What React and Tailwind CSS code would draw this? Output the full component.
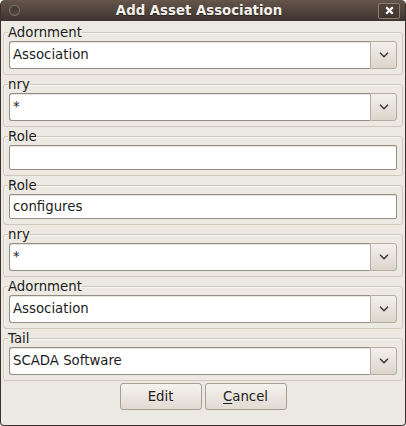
import React from "react";

function Chevron() {
  return (
    <svg width="10" height="6" viewBox="0 0 10 6" fill="none">
      <path d="M1 0.8 L5 4.8 L9 0.8" stroke="#3a3a3a" strokeWidth="1.5" />
    </svg>
  );
}

function Combo({ value }) {
  return (
    <div className="flex h-[28px]">
      <div className="flex-1 flex items-center bg-white border border-[#948d83] border-r-0 rounded-l-[3px] pl-[3px] text-[#1c1c1c] shadow-[inset_0_1px_0_#e8e4de]">
        {value}
      </div>
      <div className="w-[27px] flex items-center justify-center border border-[#b4ada2] rounded-r-[3px] bg-gradient-to-b from-[#f3f0ec] to-[#dcd5cb]">
        <Chevron />
      </div>
    </div>
  );
}

function Entry({ value }) {
  return (
    <div className="h-[25px] flex items-center bg-white border border-[#948d83] rounded-[2px] pl-[3px] text-[#1c1c1c] shadow-[inset_0_1px_0_#e8e4de]">
      {value}
    </div>
  );
}

function Group({ label, children }) {
  return (
    <fieldset className="border border-[#cfc8bc] rounded-[3px] px-[5px] pt-[1px] pb-[5px] shadow-[inset_1px_1px_0_#f7f5f2]">
      <legend className="ml-[-1px] leading-[15px] text-[#1c1c1c]">{label}</legend>
      {children}
    </fieldset>
  );
}

export default function App() {
  return (
    <div className="w-[406px] h-[426px] flex flex-col bg-white font-['DejaVu_Sans',sans-serif] text-[13.3px]">
      <div className="h-[21px] shrink-0 flex items-center rounded-t-[5px] bg-gradient-to-b from-[#65554b] to-[#3e3530] border-x border-[#3a312c]">
        <div className="w-[11px] h-[11px] ml-[8px] rounded-full border border-[#857569] bg-gradient-to-b from-[#3f352f] to-[#5a4b42]" />
        <div className="flex-1 text-center font-bold text-[13.3px] text-[#f3efeb] [text-shadow:0_1px_1px_#2a221e] leading-[21px]">
          Add Asset Association
        </div>
        <div className="w-[22px] h-[16px] mr-[5px] flex items-center justify-center border border-[#8e7d71] rounded-[2px] bg-gradient-to-b from-[#4f423a] to-[#3f3530]">
          <svg width="9" height="9" viewBox="0 0 9 9">
            <path d="M1.2 1.2 L7.8 7.8 M7.8 1.2 L1.2 7.8" stroke="#ffffff" strokeWidth="2.2" />
          </svg>
        </div>
      </div>
      <div className="flex-1 flex flex-col bg-[#ece8e2] border-x border-b border-[#3a312c] rounded-b-[4px] px-[2px] pt-[4px] gap-[2px]">
        <Group label="Adornment">
          <Combo value="Association" />
        </Group>
        <Group label="nry">
          <Combo value="*" />
        </Group>
        <Group label="Role">
          <Entry value="" />
        </Group>
        <Group label="Role">
          <Entry value="configures" />
        </Group>
        <Group label="nry">
          <Combo value="*" />
        </Group>
        <Group label="Adornment">
          <Combo value="Association" />
        </Group>
        <Group label="Tail">
          <Combo value="SCADA Software" />
        </Group>
        <div className="flex justify-center gap-[3px]">
          <button className="w-[82px] h-[27px] border border-[#a59e93] rounded-[3px] bg-gradient-to-b from-[#f5f2ee] to-[#e0dad2] text-[#1e1e1e]">
            Edit
          </button>
          <button className="w-[82px] h-[27px] border border-[#a59e93] rounded-[3px] bg-gradient-to-b from-[#f5f2ee] to-[#e0dad2] text-[#1e1e1e]">
            <span className="underline underline-offset-2">C</span>ancel
          </button>
        </div>
      </div>
    </div>
  );
}
